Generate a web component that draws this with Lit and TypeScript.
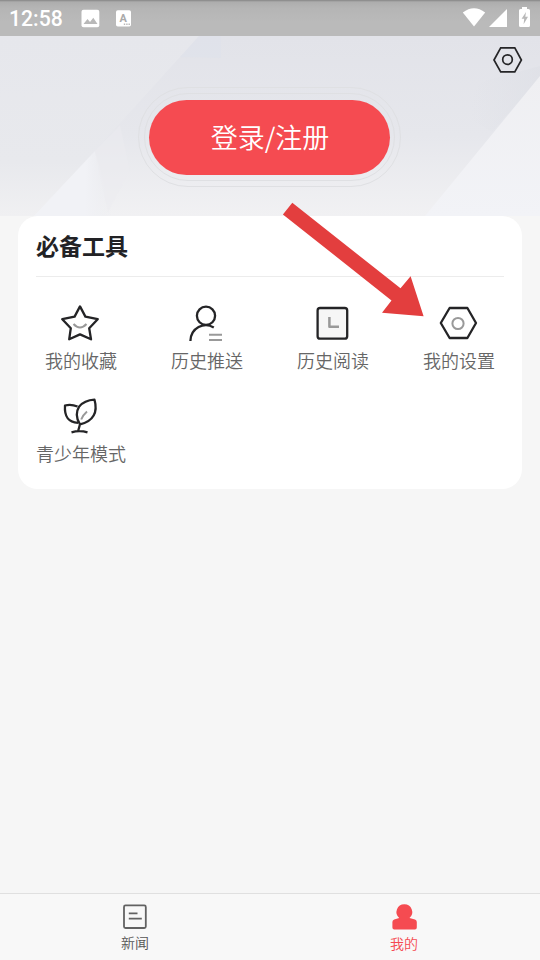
import { LitElement, html, css, svg } from "lit";
import { customElement } from "lit/decorators.js";

const star = svg`<path class="k" d="M80 306.4 L85.4 316.6 L97.7 319.2 L89.2 328.2 L91 339.3 L80 334.4 L69.2 339.3 L70.8 328.2 L62.3 319.2 L74.6 316.6 Z"/><path class="g" d="M73.5 324 Q80 331 86.5 324"/>`;
const person = svg`<circle class="k" cx="206" cy="315.8" r="9.1"/><path class="k" d="M190.4 341 C190.8 328 204 321.5 213.8 327.4"/><path class="g" d="M209 334.8H222M209 340H222"/>`;
const reading = svg`<rect class="k soft" x="317.6" y="308" width="29.6" height="30.7" rx="2.5"/><path class="g thick" d="M329.4 317V326.8H339"/>`;
const settings = svg`<path class="k" d="M440.8 323 L449.6 308 H467.4 L476 323 L467.4 338 H449.6 Z"/><circle class="g" cx="458" cy="323.5" r="5.6"/>`;
const sprout = svg`<path class="k" d="M77.5 406.5 Q71 403.7 65 405.5 C64.3 416 67.5 422 78 422.8 M80 424.3 C75.5 418 76.3 411 79 406.8 C82.5 402.5 89 400 94.5 399.7 C98 412 93.5 421.5 80 424.3 L78 431.5 M71.5 432.3 Q79.5 429.8 87.5 432.3"/><path class="g" d="M87 411.5 Q83 415 81.2 419.5"/>`;

const tools = [
  { label: "我的收藏", box: "61 303 40 40", art: star },
  { label: "历史推送", box: "187 303 40 40", art: person },
  { label: "历史阅读", box: "313 303 40 40", art: reading },
  { label: "我的设置", box: "439 303 40 40", art: settings },
  { label: "青少年模式", box: "61 396 40 40", art: sprout },
];

@customElement("status-bar")
class StatusBar extends LitElement {
  static styles = css`
    :host { display: flex; align-items: center; height: 36px; box-sizing: border-box; padding: 0 9px;
      background: linear-gradient(#858585 0, #adadad 2px, #b5b5b5 8px, #bababa 22px, #bababa 100%); color: #fff; }
    .time { font: 500 21.2px/36px Roboto, sans-serif; width: 72px; padding-top: 1px; height: 35px; }
    .left { width: 54px; height: 36px; }
    .right { width: 72px; height: 36px; margin-left: auto; }
    svg { display: block; fill: #fff; }
    .cut { fill: #b9b9b9; }
    .a { font: 700 11px Roboto, sans-serif; fill: #aaa; }
  `;
  render() {
    return html`<span class="time">12:58</span>
      <svg class="left" viewBox="81 0 54 36">
        <rect x="81.5" y="9.7" width="17.8" height="17.5" rx="2"/>
        <path class="cut" d="M83.5 24 L87.5 19 L90 22 L93.3 17.8 L97.5 24 Z"/>
        <rect x="116" y="10.3" width="15" height="16.2" rx="1.8"/>
        <text class="a" x="119.6" y="22.3">A</text>
        <path class="cut" d="M123.8 23.5h1.4v1.4h-1.4zM126.2 23.5h1.4v1.4h-1.4zM128.5 23.5h1.4v1.4h-1.4z"/>
      </svg>
      <svg class="right" viewBox="459 0 72 36">
        <path d="M462.8 12.6 Q474 3.8 485.2 12.6 L474 26.6 Z"/>
        <path d="M507 9 V27 H489 Z"/>
        <path d="M522 7h5v2h1.5q1.5 0 1.5 1.5v15q0 1.5-1.5 1.5h-8q-1.5 0-1.5-1.5v-15q0-1.5 1.5-1.5h1.5z"/>
        <path class="cut" d="M526 12 L521.6 18.8 H524.2 L523.6 24.3 L528 16.7 H525.3 Z"/>
      </svg>`;
  }
}

@customElement("login-hero")
class LoginHero extends LitElement {
  static styles = css`
    :host { display: flex; justify-content: center; position: relative; height: 180px; }
    .bg { position: absolute; inset: 0; width: 540px; height: 180px; }
    .ring { position: relative; box-sizing: border-box; border: 1px solid #dfe0e3; display: flex; align-items: center; justify-content: center; flex: none; }
    .outer { width: 263px; height: 100px; border-radius: 50px; margin: 51px 1px 0 0; }
    .inner { width: 251px; height: 88px; border-radius: 44px; }
    .login { box-sizing: border-box; width: 241px; height: 75px; border: 0; padding: 0 0 2px; border-radius: 38px; background: #f54b51; color: #fff;
      font: 350 27px/73px "Noto Sans CJK SC", sans-serif; text-indent: 1px; }
    .gear { position: absolute; right: 17px; top: 9px; width: 30px; height: 30px; fill: none; stroke: #252527; stroke-width: 1.7; }
  `;
  render() {
    return html`<svg class="bg" viewBox="0 36 540 180">
        <defs>
          <linearGradient id="base" x1="0" y1="0" x2="0" y2="1"><stop offset="0" stop-color="#e2e3e9"/><stop offset=".55" stop-color="#e6e7ec"/><stop offset="1" stop-color="#f1f1f3"/></linearGradient>
          <linearGradient id="left" x1="0" y1="0" x2="0" y2="1"><stop offset="0" stop-color="#e6e7ec"/><stop offset=".7" stop-color="#e8e9ed"/><stop offset="1" stop-color="#f0f0f2"/></linearGradient>
          <linearGradient id="pale" x1="0" y1="0" x2="1" y2="0"><stop offset="0" stop-color="#f1f2f6"/><stop offset=".65" stop-color="#f1f2f6"/><stop offset="1" stop-color="#edeef2" stop-opacity="0"/></linearGradient>
          <linearGradient id="right" x1="0" y1="0" x2="0" y2="1"><stop offset="0" stop-color="#efeff2"/><stop offset="1" stop-color="#f2f3f7"/></linearGradient>
          <linearGradient id="shade" x1="0" y1="0" x2="1" y2="0"><stop offset="0" stop-color="#dfe1e7" stop-opacity="0"/><stop offset="1" stop-color="#dee0e6"/></linearGradient>
        </defs>
        <rect y="36" width="540" height="180" fill="url(#base)"/>
        <path d="M0 36H199L113 131 L34 216H0Z" fill="url(#left)"/>
        <path d="M199 36H221V58L180 57Z" fill="#dfe2eb" opacity=".55"/>
        <path d="M34 216L95 151L113 216Z" fill="url(#pale)"/>
        <path d="M95 151L120 125L130 170L108 212Z" fill="#ebecf0" opacity=".5"/>
        <path d="M470 119Q471 88 484 81L540 66V78L492 132Z" fill="url(#shade)" opacity=".65"/>
        <path d="M540 76V216H425Z" fill="url(#right)"/>
      </svg>
      <div class="ring outer"><div class="ring inner"><button class="login">登录/注册</button></div></div>
      <svg class="gear" viewBox="493 45 30 30"><path d="M494 60 L500.7 47.8 H514.8 L521.4 60 L514.8 71.8 H500.7 Z"/><circle cx="507.5" cy="59.6" r="4.8"/></svg>`;
  }
}

@customElement("tools-card")
class ToolsCard extends LitElement {
  static styles = css`
    :host { display: block; position: relative; margin: 0 18px; height: 273px; border-radius: 20px; background: #fff; }
    .title { margin: 0 18px; height: 60px; border-bottom: 1px solid #ececec; font: 700 23px/58px "Noto Sans CJK SC", sans-serif; color: #222225; }
    .grid { display: grid; grid-template-columns: repeat(4, 126px); grid-auto-rows: 93px; padding-top: 26px; }
    .tool { display: flex; flex-direction: column; align-items: center; }
    .label { font: 350 18px/26px "Noto Sans CJK SC", sans-serif; color: #666; margin-top: 4px; white-space: nowrap; }
    .icon { width: 40px; height: 40px; fill: none; stroke-linejoin: round; }
    .k { stroke: #242426; stroke-width: 2.3; }
    .g { stroke: #999; stroke-width: 2; }
    .soft { fill: #f6f6f6; }
    .thick { stroke-width: 2.5; }
    .arrow { position: absolute; left: 262px; top: -16px; width: 148px; height: 120px; fill: #e33e3e; pointer-events: none; }
  `;
  render() {
    return html`<div class="title">必备工具</div>
      <div class="grid">${tools.map(t => html`<div class="tool"><svg class="icon" viewBox=${t.box}>${t.art}</svg><span class="label">${t.label}</span></div>`)}</div>
      <svg class="arrow" viewBox="280 200 148 120"><path d="M292.3 202.8 L400.5 288.3 L410.6 276.2 L423.6 316.2 L382 312.8 L391.5 300.4 L282.9 214.4 Z"/></svg>`;
  }
}

@customElement("tab-bar")
class TabBar extends LitElement {
  static styles = css`
    :host { display: flex; height: 67px; box-sizing: border-box; border-top: 1px solid #e0e0e0; background: #f8f8f8; }
    .tab { flex: 1; display: flex; flex-direction: column; align-items: center; font: 350 14px/20px "Noto Sans CJK SC", sans-serif; color: #555; padding-top: 7px; }
    .active { color: #f54b51; }
    .tab svg { width: 30px; height: 30px; }
    .text { margin-top: 1px; }
    .active .text { margin: 2px 2px 0 0; }
    .line { fill: none; stroke: #626262; stroke-width: 1.8; }
    .solid { fill: #f54b51; }
  `;
  render() {
    return html`<div class="tab"><svg viewBox="120 901 30 30"><g class="line"><rect x="124" y="905.4" width="21.8" height="22.6" rx="1.5"/><path d="M128.8 913.3H137.5M128.8 918.7H141.8"/></g></svg><span class="text">新闻</span></div>
      <div class="tab active"><svg viewBox="390 901 30 30"><path class="solid" d="M404.3 904.2a7.8 7.8 0 0 1 5.2 13.7L415 919.4q1.8.7 1.8 2.7v5.4q0 1.9-1.9 1.9H394.3q-1.9 0-1.9-1.9v-5.4q0-2 1.8-2.7l5-1.5a7.8 7.8 0 0 1 5.1-13.7Z"/></svg><span class="text">我的</span></div>`;
  }
}

@customElement("app-root")
class AppRoot extends LitElement {
  static styles = css`
    :host { display: flex; flex-direction: column; width: 540px; height: 960px; overflow: hidden; background: #f6f6f6; }
    .space { flex: 1; }
  `;
  render() {
    return html`<status-bar></status-bar><login-hero></login-hero><tools-card></tools-card><div class="space"></div><tab-bar></tab-bar>`;
  }
}
